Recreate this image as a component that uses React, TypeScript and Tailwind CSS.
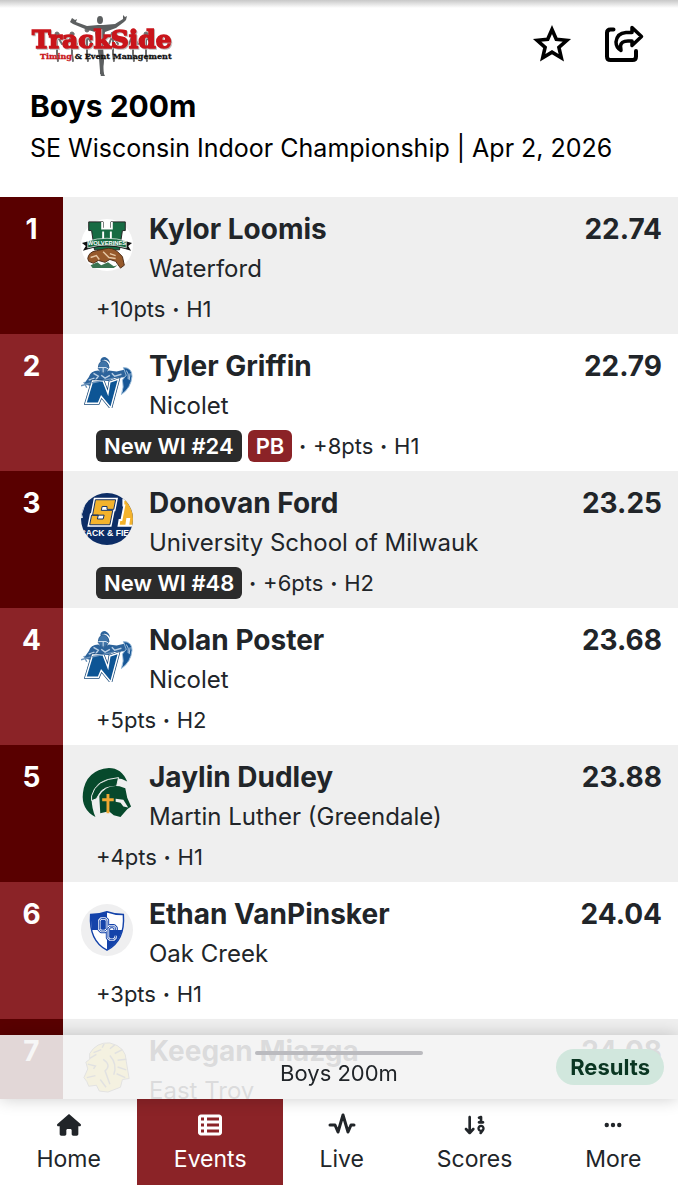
import type { ReactNode } from "react";
import { FaArrowDown19, FaEllipsis, FaHouse, FaTableList } from "react-icons/fa6";

type Result = {
  place: number;
  name: string;
  school: string;
  time: string;
  badge?: string;
  pb?: boolean;
  points: string;
  heat: string;
  logo: ReactNode;
};

function TrackSideLogo() {
  return (
    <svg viewBox="0 0 148 64" className="h-16 w-37" role="img" aria-label="TrackSide">
      {/* pack of runners */}
      <g fill="#6f6f6f" stroke="#6f6f6f" strokeWidth="2" strokeLinecap="round">
        {[27, 42, 57, 83, 103, 116].map((x) => (
          <g key={x}>
            <circle cx={x} cy={x === 57 ? 18 : 22} r="2" strokeWidth="1" />
            <path d={`M${x} 25v17l1 7M${x - 4} 32l2-5h4l3 5`} fill="none" />
          </g>
        ))}
      </g>
      {/* winner */}
      <g fill="#5c5f60">
        <ellipse cx="70" cy="8" rx="3" ry="4" />
        <path d="M42 6l3 2 2-1-1 3 11 4 11-1h5l12-1 8-5 0-4 2 2 2-1-1 4-2 2-8 6-11 4-2 14 1 14-1 12 2 4-4 1-1-6-1-13-4-26-10-3-12-5-3-2z" />
      </g>
      <g fontFamily="'DejaVu Serif', serif" fontWeight="700">
        <text x="2" y="36" fontSize="25" fill="#c9151b" stroke="#c9151b" strokeWidth="1.5" className="drop-shadow-[1px_1px_0_#bbb]">TrackSide</text>
        <text x="10" y="47" fontSize="8" fill="#111" stroke="#111" strokeWidth=".3">
          <tspan fill="#c9151b" stroke="#c9151b">Timing</tspan> &amp; Event Management
        </text>
      </g>
      <path d="M70 48l4-1-1 7 1 8-4 0z" fill="#5c5f60" />
    </svg>
  );
}

function WaterfordLogo() {
  return (
    <svg viewBox="0 0 54 54" className="size-13">
      <circle cx="27" cy="27" r="27" fill="#fff" />
      <path d="M8 3h15v7h8V3h15v9h-3l-3 20H14L11 12H8z" fill="#176b43" stroke="#222" />
      <path d="M22 3v7h10V3M23 13v11h8V13" fill="none" stroke="#fff" strokeWidth="2" />
      <path d="M1 25q26-9 52 0l-4 3 3 5q-25-9-50 0l3-5z" fill="#111" />
      <path d="M7 23q20-6 40 0v7q-20-6-40 0z" fill="#176b43" stroke="#fff" strokeWidth=".7" />
      <text x="27" y="27" textAnchor="middle" fontSize="6" fontWeight="700" fontFamily="'Liberation Sans', sans-serif" fill="#fff">WOLVERINES</text>
      <path d="M7 41q1-7 9-8l9-2q7-2 13 3l5 5 2 9-4 3-5-7-6-2-5 3-7-2-5 3-5-2z" fill="#96592b" stroke="#4c2c17" />
      <path d="M10 40l6-2 3 4M23 34l6 6 7 1M30 36l6 2" fill="none" stroke="#e5c6a3" strokeWidth="1.5" />
      <path d="M10 48l7-3 4 3 7-3 6 4 4-1-4 3H12z" fill="#397451" />
    </svg>
  );
}

function NicoletLogo() {
  return (
    <svg viewBox="0 0 54 54" className="size-13">
      {/* plume and helmet */}
      <path d="M20 6q0-5 5-5 5 2 5 7-2-4-6-4z" fill="#2c639b" />
      <path d="M18 13q0-7 5-8 5 0 6 7l-3 5h-5z" fill="#3f74a8" stroke="#24578c" />
      <path d="M18 12h8l3 2M23 12v5" fill="none" stroke="#dbe7f2" />
      {/* body and arms */}
      <path d="M8 22q2-7 10-7l5 3 6-3 8 1 9-2 3 4-4 4-12 1-4 3H15l-6 5-6-2z" fill="#2c639b" />
      <path d="M13 18l5 3-3 4M21 20l4 3 5-3M32 18l3 3 7-2M8 25l6-2" fill="none" stroke="#b9cee3" strokeWidth="1.5" />
      <path d="M44 12q9 0 9 9-1 12-11 19 3-8 1-15l4-5z" fill="#185796" stroke="#9bbbd9" />
      <path d="M47 15q3 3 2 9M51 18l-1 7" fill="none" stroke="#b9cee3" />
      <path d="M12 26h11l5 13 2-12 9-3-8 30-10-12-3 7H5z" fill="#0d5595" stroke="#194979" strokeWidth="3" />
      <path d="M12 26h11l5 13 2-12 9-3-8 30-10-12-3 7H5z" fill="#0d5595" stroke="#fff" strokeWidth="1.5" />
      <path d="M0 31l10-3M3 27l3 6M11 28l23-5" stroke="#6d94bb" strokeWidth="1.5" />
    </svg>
  );
}

function UniversityLogo() {
  return (
    <svg viewBox="0 0 54 54" className="size-13">
      <defs>
        <clipPath id="usm">
          <circle cx="27" cy="27" r="27" />
        </clipPath>
      </defs>
      <g clipPath="url(#usm)">
        <path d="M0 0h54v54H0z" fill="#0c2d66" />
        <path d="M15 7h21l-2 10h-7v-3h-5l-1 4h12l-3 15H9l2-10h7l-1 4h6l1-4H12z" fill="#f4b32c" stroke="#fff" strokeWidth="4" />
        <path d="M15 7h21l-2 10h-7v-3h-5l-1 4h12l-3 15H9l2-10h7l-1 4h6l1-4H12z" fill="#f4b32c" stroke="#0c2d66" />
        <path d="M44 7h12v27h-7l1-7h-2l-1 7h-8l1-6h2l3-15h-1z" fill="#f4b32c" stroke="#fff" strokeWidth="2" />
        <path d="M3 13l-3 9 1 4" fill="none" stroke="#fff" strokeWidth="2" />
        <text x="27" y="45" textAnchor="middle" fontSize="9" fontWeight="700" fontFamily="'Liberation Sans', sans-serif" fill="#fff">RACK &amp; FIEL</text>
      </g>
    </svg>
  );
}

function MartinLutherLogo() {
  return (
    <svg viewBox="0 0 54 54" className="size-13">
      <path d="M15 52Q0 44 2 27 5 3 29 1q13 0 19 14-7-4-14-3Q14 13 11 32q0 11 4 20z" fill="#07492c" />
      <path d="M11 30Q15 13 39 11l-2 9q-14 0-18 8l-3 5-5 2z" fill="#07492c" stroke="#efefef" />
      <path d="M19 30q7-12 21-10l6 2 2 10 4 9-4 3-7 8-7-2-5-4-9 2z" fill="#07492c" />
      <path d="M36 33l8 1 5 8-5-1-3-4-5-1z" fill="#efefef" />
      <path d="M28 28v20M22 34h12" stroke="#f0a832" strokeWidth="3" />
    </svg>
  );
}

function OakCreekLogo() {
  return (
    <svg viewBox="0 0 54 54" className="size-13">
      <circle cx="27" cy="27" r="27" fill="#efeff0" />
      <path d="M10 11q9 0 17-3 8 3 17 3 2 27-17 37Q8 38 10 11z" fill="#fff" />
      <path d="M10 11q9 0 17-3v19H11zM27 27h16q-4 14-16 21z" fill="#1443aa" />
      <path d="M10 11q9 0 17-3 8 3 17 3 2 27-17 37Q8 38 10 11z" fill="none" stroke="#1443aa" strokeWidth="1.5" />
      <g fill="none" strokeLinejoin="round">
        <path d="M21 15h4l2 2v9l-2 2h-4l-2-2v-9zM36 27v-2l-2-2h-4l-2 2v10l2 2h4l2-2v-2" stroke="#1443aa" strokeWidth="4.5" />
        <path d="M21 15h4l2 2v9l-2 2h-4l-2-2v-9zM36 27v-2l-2-2h-4l-2 2v10l2 2h4l2-2v-2" stroke="#fff" strokeWidth="2.5" />
        <path d="M21 15h4l2 2v9l-2 2h-4l-2-2v-9zM36 27v-2l-2-2h-4l-2 2v10l2 2h4l2-2v-2" stroke="#1443aa" />
      </g>
    </svg>
  );
}

function EastTroyLogo() {
  return (
    <svg viewBox="0 0 54 54" className="size-13">
      <path d="M9 13Q16 1 30 2q17 4 17 19l3 18-7 1-2 8-13 5-9-1-3-6-8 1-2-5-3-4 4-9-2-7 4-3z" fill="#e8d34d" stroke="#555" />
      <path d="M9 18l7-4M13 12l8-3M22 7l2-4M30 8l5-4M35 13l8-4M38 20l9-1M38 27l9 3M37 34l9 4M7 24l8 2-2 3M6 38l9-2M23 19q9 6 2 12l5 14M30 15q8 9 4 20M20 40l6 8" fill="none" stroke="#555" strokeWidth="1.5" />
    </svg>
  );
}

const results: Result[] = [
  { place: 1, name: "Kylor Loomis", school: "Waterford", time: "22.74", points: "+10pts", heat: "H1", logo: <WaterfordLogo /> },
  { place: 2, name: "Tyler Griffin", school: "Nicolet", time: "22.79", badge: "New WI #24", pb: true, points: "+8pts", heat: "H1", logo: <NicoletLogo /> },
  { place: 3, name: "Donovan Ford", school: "University School of Milwauk", time: "23.25", badge: "New WI #48", points: "+6pts", heat: "H2", logo: <UniversityLogo /> },
  { place: 4, name: "Nolan Poster", school: "Nicolet", time: "23.68", points: "+5pts", heat: "H2", logo: <NicoletLogo /> },
  { place: 5, name: "Jaylin Dudley", school: "Martin Luther (Greendale)", time: "23.88", points: "+4pts", heat: "H1", logo: <MartinLutherLogo /> },
  { place: 6, name: "Ethan VanPinsker", school: "Oak Creek", time: "24.04", points: "+3pts", heat: "H1", logo: <OakCreekLogo /> },
  { place: 7, name: "Keegan Miazga", school: "East Troy", time: "24.08", points: "+2pts", heat: "H1", logo: <EastTroyLogo /> },
];

function StarIcon() {
  return (
    <svg viewBox="0 0 40 40" className="size-10" fill="none" stroke="currentColor" strokeWidth="3.6">
      <path d="M20 5.5l4.300 9.700 10.500 1.100-7.900 7 2.400 10.400-9.300-5.500-9.300 5.500 2.400-10.400-7.900-7 10.500-1.100z" />
    </svg>
  );
}

function ShareIcon() {
  return (
    <svg viewBox="0 0 40 40" className="size-10" fill="none" stroke="currentColor" strokeWidth="4" strokeLinecap="round" strokeLinejoin="round">
      <path d="M9.500 5.500H6.500Q3 5.500 3 9V32.500Q3 36 6.500 36H28.500Q32 36 32 32.500V27" />
      <path d="M28 3.500L37.500 12.500 28 21.500V17H24Q17 17 16.500 22L17 26.500Q12 23.500 12 18 13 9 22 8.500H28z" strokeWidth="3.5" />
    </svg>
  );
}

function PulseIcon() {
  return (
    <svg viewBox="0 0 28 24" className="h-6 w-7" fill="none" stroke="currentColor" strokeWidth="3" strokeLinecap="round" strokeLinejoin="round">
      <path d="M2 12h5l3 7 5-17 5 17 3-7h3" />
    </svg>
  );
}

const tabs = [
  { label: "Home", icon: <FaHouse className="size-6" /> },
  { label: "Events", icon: <FaTableList className="size-6" />, active: true },
  { label: "Live", icon: <PulseIcon /> },
  { label: "Scores", icon: <FaArrowDown19 className="size-6" /> },
  { label: "More", icon: <FaEllipsis className="size-5" /> },
];

function Dot() {
  return <span className="text-xs">•</span>;
}

function ResultRow({ result }: { result: Result }) {
  return (
    <li className="group flex odd:bg-[#efefef] even:bg-white">
      <div className="w-[63px] shrink-0 bg-[#8b2327] pt-3 text-center text-[28px] leading-10 font-bold text-white group-odd:bg-[#590000]">
        {result.place}
      </div>
      <div className="min-w-0 flex-1 pt-3 pr-4 pb-[7px] pl-[18px]">
        <div className="flex gap-4">
          <div className="pt-2.5">{result.logo}</div>
          <div className="min-w-0 flex-1">
            <h2 className="text-[28px] leading-10 font-bold">{result.name}</h2>
            <p className="text-2xl leading-10">{result.school}</p>
          </div>
          <span className="text-[28px] leading-10 font-bold">{result.time}</span>
        </div>
        <div className="mt-0.5 flex h-9 items-center gap-[7px] pl-[15px] text-[22px] leading-8">
          {result.badge && (
            <span className="flex gap-1.5 font-semibold text-white">
              <span className="rounded-md bg-[#2b2b2b] px-2">{result.badge}</span>
              {result.pb && <span className="rounded-md bg-[#8b2327] px-2">PB</span>}
            </span>
          )}
          {result.badge && <Dot />}
          <span>{result.points}</span>
          <Dot />
          <span>{result.heat}</span>
        </div>
      </div>
    </li>
  );
}

export default function App() {
  return (
    <div className="h-screen overflow-hidden bg-white font-[Inter,sans-serif] text-[#212529]">
      <header className="bg-linear-to-b from-[#c8c8c8] to-white to-[8px] px-[30px] pt-3 pb-[29px] text-black">
        <div className="flex items-center justify-between">
          <a href="#home">
            <TrackSideLogo />
          </a>
          <div className="flex gap-8 pr-1">
            <button type="button" aria-label="Favorite">
              <StarIcon />
            </button>
            <button type="button" aria-label="Share">
              <ShareIcon />
            </button>
          </div>
        </div>
        <h1 className="pt-2 text-[30px] leading-11 font-bold">Boys 200m</h1>
        <p className="text-[25px] leading-10">SE Wisconsin Indoor Championship | Apr 2, 2026</p>
      </header>

      <ol>
        {results.map((result) => (
          <ResultRow key={result.place} result={result} />
        ))}
      </ol>

      <footer className="fixed inset-x-0 bottom-0">
        <div className="relative flex h-16 items-center justify-center bg-[#f5f5f5]/88 shadow-[0_0_16px_rgba(0,0,0,0.2)]">
          <span className="absolute top-4 left-1/2 h-1 w-42 -translate-x-1/2 rounded-full bg-[#bbbbbf]" />
          <span className="pt-3 text-[22px] leading-8">Boys 200m</span>
          <button type="button" className="absolute right-3.5 rounded-full bg-[#d1e7dd] px-3.5 text-[22px] leading-9 font-bold text-[#0a3622]">
            Results
          </button>
        </div>
        <nav className="flex bg-white pb-[15px]">
          {tabs.map((tab) => (
            <a
              key={tab.label}
              href={`#${tab.label.toLowerCase()}`}
              className={`flex flex-auto flex-col items-center pt-3 pb-1.5 ${tab.active ? "bg-[#8b2327] text-white" : ""}`}
            >
              <span className="flex h-7 items-center">{tab.icon}</span>
              <span className="text-[23px] leading-10">{tab.label}</span>
            </a>
          ))}
        </nav>
      </footer>
    </div>
  );
}
